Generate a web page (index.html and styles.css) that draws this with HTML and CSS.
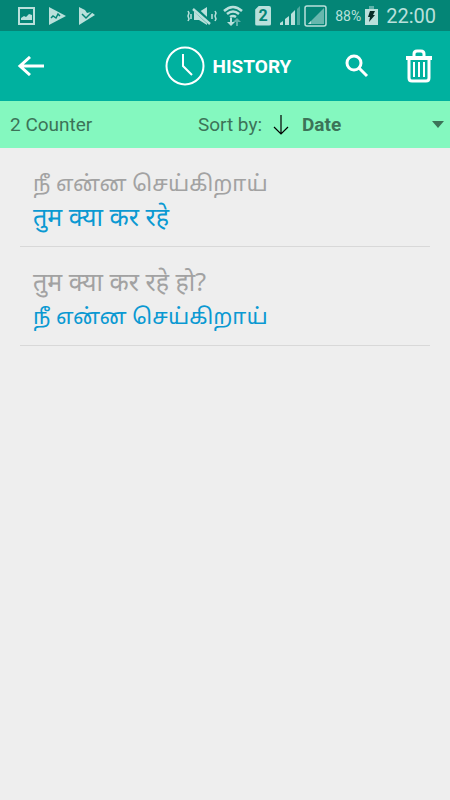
FILE: index.html
```html
<!DOCTYPE html>
<html lang="en">
<head>
<meta charset="utf-8">
<meta name="viewport" content="width=device-width, initial-scale=1">
<title>History</title>
<link rel="stylesheet" href="styles.css">
</head>
<body>
<div class="status">
  <div class="status-left">
    <svg width="18" height="20" viewBox="0 0 18 20"><path fill-rule="evenodd" d="M0 1h17v18H0zM2 3v14h13V3z"/><path d="M3 14v-2l3-2 2 1 3-3 3 1v5z"/></svg>
    <svg width="17" height="20" viewBox="0 0 17 20"><path d="M0 1l17 9-17 9z"/><path class="cut thin" d="M2 12l2-2 3 2 2-4 2 2"/></svg>
    <svg width="17" height="20" viewBox="0 0 17 20"><path d="M0 1l6 3 2 3 4-1 4 3L0 19z"/><path class="cut thin" d="M3 8l4 4 6-6"/></svg>
  </div>
  <div class="status-right">
    <svg width="30" height="20" viewBox="0 0 30 20"><path d="M7 6h5l8-5v18l-8-5H7z"/><path class="cut wide" d="M8 3l15 14"/><path class="stroke thick" d="M6 3l17 15"/><path class="stroke" d="M1 5l1 2-1 3 1 3-1 2M4 8v5M25 8v5M28 5l1 2-1 3 1 3-1 2"/></svg>
    <svg class="wifi" width="20" height="22" viewBox="0 0 20 22"><path class="stroke thick" d="M1 6q9-8 18 0M4 9q6-5 12 0M7 12q3-2 6 0"/><path d="M8 21l-4-4h3v-4h2v4h3z"/><path opacity=".5" d="M14 13l4 4h-3v4h-2v-4h-3z"/></svg>
    <span class="sim">2</span>
    <svg class="signal" width="20" height="20" viewBox="0 0 20 20"><path d="M0 17l3-2v4H0zM5 13l4-3v9H5zM11 8l4-4v15h-4z"/><path opacity=".4" d="M17 3l3-3v19h-3z"/></svg>
    <svg width="23" height="22" viewBox="0 0 23 22"><rect class="stroke" x="1" y="1" width="21" height="20" rx="2"/><path opacity=".55" d="M20 3v16H4z"/><path d="M4 19l3-3v3z"/></svg>
    <span class="percent">88%</span>
    <svg class="battery" width="13" height="20" viewBox="0 0 13 20"><path opacity=".5" d="M4 0h5v3H4z"/><path d="M0 3h13v16H0z"/><path fill="#062c27" d="M5 5h5L8 9h2l-6 7 1-5H3z"/></svg>
    <time class="time">22:00</time>
  </div>
</div>

<header class="bar">
  <button class="icon-button back" aria-label="Back"><svg width="28" height="20" viewBox="0 0 28 20"><path d="M27 10H3M13 1L3 10l10 9"/></svg></button>
  <h1 class="title">
    <svg width="40" height="40" viewBox="0 0 40 40"><circle cx="20" cy="20" r="18.500"/><path d="M18 8v12l9 9"/></svg>
    HISTORY
  </h1>
  <button class="icon-button search" aria-label="Search"><svg width="24" height="24" viewBox="0 0 24 24"><circle cx="9" cy="9" r="7"/><path d="M14 14l8 8"/></svg></button>
  <button class="icon-button" aria-label="Delete"><svg width="28" height="34" viewBox="0 0 28 34"><path class="lid" d="M1 9h26"/><path class="can" d="M9 8V5q0-3 3-3h4q3 0 3 3v3M4 10v19q0 3 3 3h14q3 0 3-3V10"/><path d="M9 13v15M14 13v15M19 13v15"/></svg></button>
</header>

<div class="sort">
  <span class="count">2 Counter</span>
  <label class="sort-label" for="order">Sort by:</label>
  <svg class="down" width="16" height="22" viewBox="0 0 16 22"><path d="M8 1v19M1 13l7 7 7-7"/></svg>
  <div class="select-wrap">
    <select id="order" class="order"><option>Date</option></select>
    <svg class="caret" width="12" height="7" viewBox="0 0 12 7"><path d="M0 0h12L6 7z"/></svg>
  </div>
</div>

<main class="list">
  <article class="entry">
    <p class="source tamil" lang="ta">நீ என்ன செய்கிறாய்</p>
    <p class="result" lang="hi">तुम क्या कर रहे</p>
  </article>
  <article class="entry">
    <p class="source" lang="hi">तुम क्या कर रहे हो?</p>
    <p class="result tamil" lang="ta">நீ என்ன செய்கிறாய்</p>
  </article>
</main>
</body>
</html>
```
FILE: styles.css
```css
* {
  box-sizing: border-box;
}

body {
  margin: 0;
  min-height: 100vh;
  background: #eeeeee;
  font-family: Roboto, "Noto Sans", sans-serif;
}

svg {
  display: block;
  flex: none;
}

.status {
  display: flex;
  justify-content: space-between;
  align-items: center;
  height: 31px;
  padding: 0 14px 0 18px;
  background: #048576;
  color: #b9e0db;
}

.status svg {
  fill: #b9e0db;
}

.status-left,
.status-right {
  display: flex;
  align-items: center;
}

.status-left {
  gap: 13px;
}

.status .cut {
  fill: none;
  stroke: #048576;
}

.status .thin {
  stroke-width: 1.5;
}

.status .wide {
  stroke-width: 5;
}

.status .stroke {
  fill: none;
  stroke: #b9e0db;
  stroke-width: 1.5;
}

.status .thick {
  stroke-width: 2.5;
}

.wifi {
  margin-left: 6px;
}

.sim {
  width: 16px;
  height: 20px;
  margin-left: 12px;
  border-radius: 2px;
  background: #b9e0db;
  clip-path: polygon(4px 0, 100% 0, 100% 100%, 0 100%, 0 4px);
  color: #048576;
  font-size: 16px;
  font-weight: 700;
  line-height: 20px;
  text-align: center;
}

.signal {
  margin: 0 4px 0 9px;
}

.percent {
  margin-left: 8px;
  font-size: 14px;
}

.battery {
  margin: 0 8px 0 4px;
}

.time {
  font-size: 20px;
}

.bar {
  display: flex;
  align-items: center;
  height: 70px;
  padding: 0 17px;
  background: #00b19f;
  color: #ffffff;
}

.bar svg {
  fill: none;
  stroke: #ffffff;
  stroke-width: 2;
}

.icon-button {
  padding: 0;
  border: 0;
  background: none;
}

.bar .back svg,
.bar .search svg {
  stroke-width: 3;
}

.search {
  margin-right: 36px;
}

.bar .lid {
  stroke-width: 4;
}

.bar .can {
  stroke-width: 3;
}

.title {
  display: flex;
  flex: 1;
  justify-content: center;
  align-items: center;
  gap: 8px;
  margin: 0;
  padding-left: 66px;
  font-size: 19px;
  font-weight: 700;
}

.sort {
  display: flex;
  align-items: center;
  height: 47px;
  padding: 0 6px 0 10px;
  background: #84f8bf;
  color: #3c7358;
  font-size: 19px;
}

.count {
  flex: 1;
}

.down {
  margin: 0 13px 0 11px;
  fill: none;
  stroke: #000000;
  stroke-width: 1.2;
}

.select-wrap {
  position: relative;
  flex: 0 0 142px;
}

.order {
  display: block;
  width: 100%;
  padding: 0 20px 0 0;
  border: 0;
  appearance: none;
  background: none;
  color: inherit;
  font: inherit;
  font-weight: 700;
}

.caret {
  position: absolute;
  top: 8px;
  right: 0;
  fill: #3c7358;
  pointer-events: none;
}

.list {
  padding: 0 20px;
}

.entry {
  padding: 17px 13px 13px;
  border-bottom: 1px solid #d8d8d8;
}

.source,
.result {
  margin: 0;
  font-family: "Noto Sans", "Noto Sans Tamil", "Noto Sans Devanagari", sans-serif;
  font-size: 25px;
  line-height: 34px;
}

.source {
  color: #a2a2a2;
}

.result {
  color: #0a99d2;
}

.tamil {
  font-size: 22px;
}
```
